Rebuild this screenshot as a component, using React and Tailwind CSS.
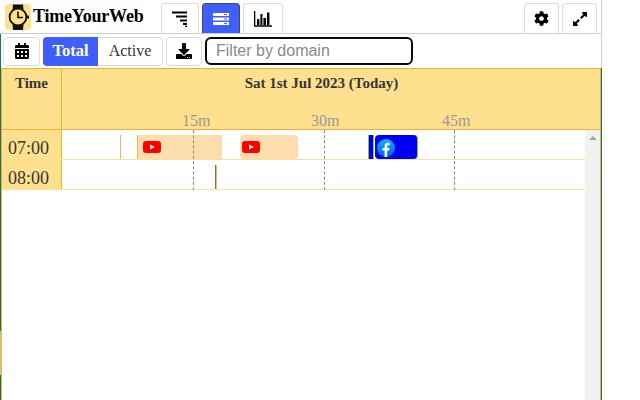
import React from 'react'
import { FaCalendarAlt, FaCog, FaDownload, FaExpandAlt } from 'react-icons/fa'

const YouTubeIcon = () => (
  <svg width="18" height="12" viewBox="0 0 18 12" className="block">
    <rect width="18" height="12" rx="3" fill="#ff0000" />
    <path d="M7 3.4 L11.8 6 L7 8.6 Z" fill="#fff" />
  </svg>
)

const FacebookIcon = () => (
  <svg width="18" height="18" viewBox="0 0 18 18" className="block">
    <defs>
      <linearGradient id="fb" x1="0" y1="0" x2="0" y2="1">
        <stop offset="0" stopColor="#19afff" />
        <stop offset="1" stopColor="#0062e0" />
      </linearGradient>
    </defs>
    <circle cx="9" cy="9" r="9" fill="url(#fb)" />
    <path d="M7.6 18 V11.6 H5.5 V9 H7.6 V7 C7.6 4.9 8.9 3.8 10.7 3.8 C11.6 3.8 12.3 3.9 12.6 4 V6.2 H11.4 C10.4 6.2 10.2 6.7 10.2 7.4 V9 H12.5 L12.1 11.6 H10.2 V18 Z" fill="#fff" />
  </svg>
)

const WatchLogo = () => (
  <div className="w-[26px] h-[26px] rounded bg-[#ffe08e] flex items-center justify-center">
    <svg width="22" height="26" viewBox="0 0 22 26">
      <path d="M6 0.5 H16 L16.5 6 H5.5 Z M5.5 20 H16.5 L16 26 H6 Z" fill="#111" />
      <circle cx="11" cy="13" r="8.4" fill="#ffe08e" stroke="#111" strokeWidth="1.8" />
      <path d="M11 7.5 V13.5 H16" fill="none" stroke="#111" strokeWidth="1.6" />
      <rect x="20" y="11.5" width="2" height="3" fill="#111" />
    </svg>
  </div>
)

const WaterfallIcon = () => (
  <svg width="16" height="16" viewBox="0 0 16 16" className="block">
    <path d="M0 1.5 H15 M4 5.5 H15 M8 9.5 H15 M11 13 H15" stroke="#000" strokeWidth="2.2" />
    <path d="M13 15.5 H15" stroke="#000" strokeWidth="1.4" />
  </svg>
)

const StackIcon = () => (
  <svg width="16" height="14" viewBox="0 0 16 14" className="block">
    <path d="M0 1 H16 V4 H0 Z M0 5.5 H16 V8.5 H0 Z M0 10 H16 V13 H0 Z" fill="#fff" />
    <path d="M11 2.5 H14 M11 7 H14 M11 11.5 H14" stroke="#3e5ffb" strokeWidth="1" />
  </svg>
)

const ChartIcon = () => (
  <svg width="18" height="16" viewBox="0 0 18 16" className="block">
    <path d="M0.6 0 V15 H18" fill="none" stroke="#000" strokeWidth="1.4" />
    <path d="M3 8 H5.4 V14 H3 Z M6.4 3 H8.4 V14 H6.4 Z M9.4 7 H12 V14 H9.4 Z M13 1.5 H15.4 V14 H13 Z" fill="#000" />
  </svg>
)

const Tab = ({ width, active, children }) => (
  <div
    className={`h-[30px] ${width} rounded-t border border-b-0 flex items-center justify-center ${
      active ? 'bg-[#3e5ffb] border-[#4a4a4a]' : 'bg-white border-[#dbdbdb]'
    }`}
  >
    {children}
  </div>
)

const HourRow = ({ label, children }) => (
  <div className="flex h-[30px] border-b border-[#ffe08e]">
    <div className="w-[60px] bg-[#ffe08e] border-r border-[#f0b429] text-[18px] leading-[36px] pl-[6px] text-[#363636]">
      {label}
    </div>
    <div className="relative flex-1">{children}</div>
  </div>
)

const Marker = ({ className }) => <div className={`absolute ${className}`} />

export default function App() {
  return (
    <div className="relative w-[640px] h-[400px] bg-white overflow-hidden font-['Liberation_Serif',serif]">
      <div className="w-[602px] h-full flex flex-col">
        {/* Top tabs */}
        <div className="h-[34px] border-b border-[#cfcfcf] border-r flex items-end pl-[5px] pr-[4px]">
          <div className="flex items-center h-full">
            <WatchLogo />
            <span className="ml-[2px] text-[18px] tracking-[-0.2px] font-bold text-black whitespace-nowrap">TimeYourWeb</span>
          </div>
          <div className="flex gap-[3px] ml-[18px]">
            <Tab width="w-[38px]"><WaterfallIcon /></Tab>
            <Tab width="w-[38px]" active><StackIcon /></Tab>
            <Tab width="w-[40px]"><ChartIcon /></Tab>
          </div>
          <div className="flex gap-[3px] ml-auto">
            <Tab width="w-[35px]"><FaCog className="text-[15px] text-black" /></Tab>
            <Tab width="w-[35px]"><FaExpandAlt className="text-[16px] text-black" /></Tab>
          </div>
        </div>

        {/* Toolbar */}
        <div className="h-[34px] border-r border-[#cfcfcf] flex items-center pl-[2px] gap-[3px] border-l border-l-[#0b7285]">
          <div className="w-[37px] h-[29px] border border-[#dbdbdb] rounded flex items-center justify-center">
            <FaCalendarAlt className="text-[16px] text-black" />
          </div>
          <div className="flex h-[29px] w-[120px] rounded text-[16px] overflow-hidden">
            <div className="w-[55px] bg-[#3e5ffb] text-white text-[16.5px] font-bold flex items-center justify-center">Total</div>
            <div className="flex-1 text-[#363636] border border-l-0 border-[#dbdbdb] rounded-r flex items-center justify-center">Active</div>
          </div>
          <div className="w-[36px] h-[29px] border border-[#dbdbdb] rounded flex items-center justify-center">
            <FaDownload className="text-[16px] text-black" />
          </div>
          <div className="w-[208px] h-[28px] border-2 border-[#0a0a0a] rounded-md flex items-center pl-[9px] font-['Liberation_Sans',sans-serif] text-[16px] text-[#8a8a8a]">
            Filter by domain
          </div>
        </div>

        {/* Table */}
        <div className="flex-1 flex flex-col border-l border-l-[#0b7285] border-r border-r-[#0b7285]">
          <div className="flex-1 flex flex-col border-x border-[#f0b429] min-h-0">
            <div className="h-[62px] flex bg-[#ffe08e] border-y border-[#f0b429] text-[#363636]">
              <div className="w-[60px] border-r border-[#f0b429] text-center font-bold text-[15px] pt-[5px] leading-[18px]">
                Time
              </div>
              <div className="flex-1 flex flex-col">
                <div className="font-bold text-[15px] pt-[5px] leading-[18px] text-center pr-[19px]">
                  Sat 1st Jul 2023 (Today)
                </div>
                <div className="relative flex-1 text-[16px] text-[#999]">
                  <span className="absolute left-[120px] top-[20px] leading-[18px]">15m</span>
                  <span className="absolute left-[249px] top-[20px] leading-[18px]">30m</span>
                  <span className="absolute left-[380px] top-[20px] leading-[18px]">45m</span>
                </div>
              </div>
            </div>

            <div className="flex-1 flex min-h-0">
              <div className="flex-1 relative">
                <HourRow label="07:00">
                  <Marker className="left-[58px] top-[5px] bottom-0 w-px bg-[#e3b67c]" />
                  <div className="absolute left-[75px] top-[5px] bottom-0 w-[85px] bg-[#fddcae] border-l border-[#e3b67c] pl-[5px] pt-[6px]">
                    <YouTubeIcon />
                  </div>
                  <div className="absolute left-[178px] top-[5px] bottom-0 w-[58px] bg-[#fddcae] rounded-sm pl-[2px] pt-[6px]">
                    <YouTubeIcon />
                  </div>
                  <div className="absolute left-[306px] top-[5px] bottom-0 w-[6px] bg-[#0000f5] border-x border-[#8fbf3f]" />
                  <div className="absolute left-[313px] top-[5px] bottom-0 w-[43px] bg-[#0000f5] border-r border-[#8fbf3f] rounded-sm pl-[2px] pt-[4px]">
                    <FacebookIcon />
                  </div>
                </HourRow>
                <HourRow label="08:00">
                  <div className="absolute left-[153px] top-[5px] bottom-0 w-[2px] bg-[#7a7a3a] border-r border-[#e3b67c]" />
                </HourRow>
                <div className="absolute left-[191px] top-0 h-[60px] border-l border-dashed border-[#888]" />
                <div className="absolute left-[322px] top-0 h-[60px] border-l border-dashed border-[#888]" />
                <div className="absolute left-[452px] top-0 h-[60px] border-l border-dashed border-[#888]" />
              </div>
              <div className="w-[15px] bg-[#f1f1f1] flex justify-center pt-[6px]">
                <div className="w-0 h-0 border-x-[4px] border-x-transparent border-b-[4px] border-b-[#a3a3a3]" />
              </div>
            </div>
          </div>
        </div>
      </div>
      {/* window edge gap on the left */}
      <div className="absolute left-0 top-[331px] w-px h-[44px] bg-[#c9c0a8]" />
    </div>
  )
}
